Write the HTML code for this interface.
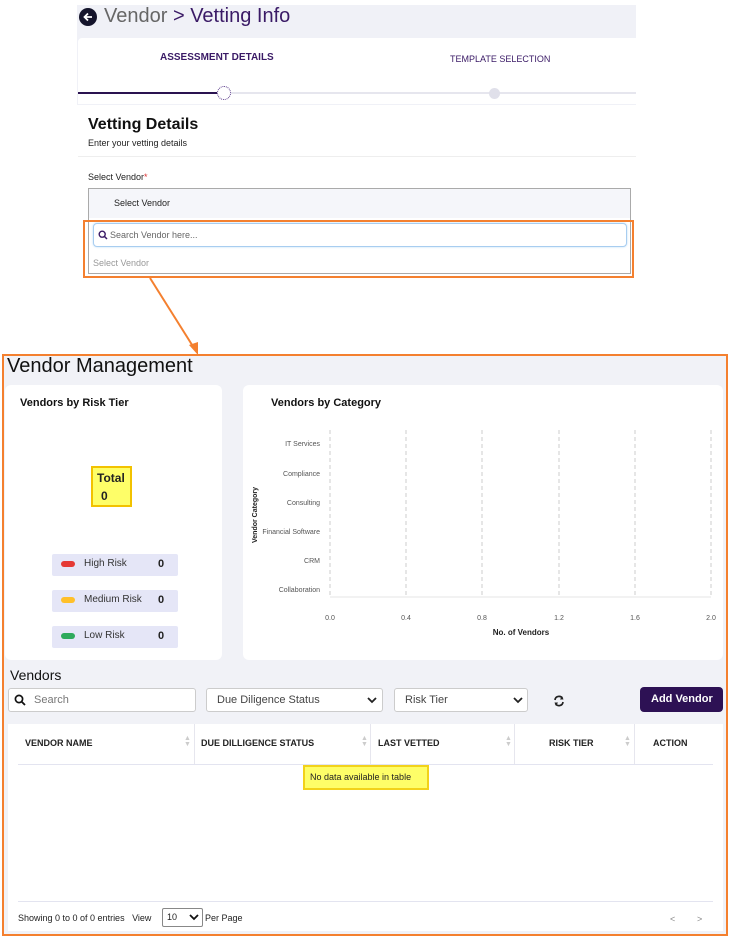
<!DOCTYPE html>
<html><head><meta charset="utf-8"><style>
*{box-sizing:border-box;margin:0;padding:0}
body{width:729px;height:939px;background:#fff;font-family:"Liberation Sans",Arial,sans-serif;position:relative;overflow:hidden;color:#222}
.a{position:absolute}
.t{white-space:nowrap}
</style></head><body>
<div class="a" style="left:77px;top:5px;width:559px;height:100px;background:#f0f1f7"></div>
<div class="a" style="left:79px;top:8px;width:18px;height:18px;border-radius:50%;background:#14142b"></div>
<svg class="a" style="left:79px;top:8px" width="18" height="18"><path d="M13 9H5.5M9 5.5L5.5 9L9 12.5" stroke="#fff" stroke-width="1.8" fill="none"/></svg>
<div class="a t" style="left:104px;top:5px;font-size:20px;color:#666">Vendor <span style="color:#3a1a66">&gt; Vetting Info</span></div>
<div class="a" style="left:78px;top:38px;width:558px;height:66px;background:#fff;border-radius:4px 0 0 0"></div>
<div class="a t" style="left:160px;top:52px;font-size:10px;font-weight:bold;color:#3a1a66">ASSESSMENT DETAILS</div>
<div class="a t" style="left:450px;top:54px;font-size:9px;color:#3a1a66">TEMPLATE SELECTION</div>
<div class="a" style="left:78px;top:92px;width:558px;height:2px;background:#e6e6ee"></div>
<div class="a" style="left:78px;top:92px;width:140px;height:2px;background:#2a1350"></div>
<div class="a" style="left:217px;top:86px;width:14px;height:14px;border-radius:50%;border:1px dotted #5a3a8a;background:#fff"></div>
<div class="a" style="left:489px;top:88px;width:11px;height:11px;border-radius:50%;background:#e0e0ea"></div>
<div class="a" style="left:78px;top:106px;width:558px;height:170px;background:#fff"></div>
<div class="a t" style="left:88px;top:116px;font-size:16px;font-weight:bold;color:#111">Vetting Details</div>
<div class="a t" style="left:88px;top:138px;font-size:9px;color:#222">Enter your vetting details</div>
<div class="a" style="left:78px;top:156px;width:558px;height:1px;background:#eee"></div>
<div class="a t" style="left:88px;top:172px;font-size:9px;color:#222">Select Vendor<span style="color:#d33">*</span></div>
<div class="a" style="left:88px;top:188px;width:543px;height:86px;border:1px solid #aaa;background:#f5f6fa"></div>
<div class="a t" style="left:114px;top:198px;font-size:9px;color:#222">Select Vendor</div>
<div class="a" style="left:89px;top:218px;width:541px;height:55px;background:#fff"></div>
<div class="a" style="left:93px;top:223px;width:534px;height:24px;border:1px solid #a8cdf0;border-radius:4px;box-shadow:0 0 2px #bcdcf7;background:#fff"></div>
<svg class="a" style="left:98px;top:230px" width="10" height="10"><circle cx="4.2" cy="4.2" r="3" stroke="#3a1a66" stroke-width="1.4" fill="none"/><path d="M6.5 6.5L9 9" stroke="#3a1a66" stroke-width="1.5"/></svg>
<div class="a t" style="left:110px;top:230px;font-size:9px;color:#666">Search Vendor here...</div>
<div class="a t" style="left:93px;top:258px;font-size:9px;color:#999">Select Vendor</div>
<div class="a" style="left:83px;top:220px;width:551px;height:58px;border:2px solid #f4802f"></div>
<svg class="a" style="left:0;top:0" width="729" height="360"><path d="M150 278L194 348" stroke="#f4802f" stroke-width="2"/><path d="M189 345L198 355L198 342Z" fill="#f4802f"/></svg>

<div class="a" style="left:2px;top:354px;width:726px;height:582px;background:#f1f2f7;border:2px solid #f4802f"></div>
<div class="a t" style="left:7px;top:355px;font-size:20px;color:#111">Vendor Management</div>
<div class="a" style="left:5px;top:385px;width:217px;height:275px;background:#fff;border-radius:6px"></div>
<div class="a t" style="left:20px;top:397px;font-size:11px;font-weight:bold;color:#111">Vendors by Risk Tier</div>
<div class="a" style="left:91px;top:466px;width:41px;height:41px;background:#fefe68;border:2px solid #f2c200"></div>
<div class="a t" style="left:97px;top:471px;font-size:12px;font-weight:bold">Total</div>
<div class="a t" style="left:101px;top:489px;font-size:12px;font-weight:bold">0</div>
<div class="a" style="left:52px;top:554px;width:126px;height:22px;background:#e5e6f7;border-radius:2px"></div>
<div class="a" style="left:52px;top:590px;width:126px;height:22px;background:#e5e6f7;border-radius:2px"></div>
<div class="a" style="left:52px;top:626px;width:126px;height:22px;background:#e5e6f7;border-radius:2px"></div>
<div class="a" style="left:61px;top:561px;width:14px;height:6px;border-radius:3px;background:#e53935"></div>
<div class="a" style="left:61px;top:597px;width:14px;height:6px;border-radius:3px;background:#ffc02a"></div>
<div class="a" style="left:61px;top:633px;width:14px;height:6px;border-radius:3px;background:#2eaa5c"></div>
<div class="a t" style="left:84px;top:558px;font-size:10px;color:#333">High Risk</div>
<div class="a t" style="left:84px;top:594px;font-size:10px;color:#333">Medium Risk</div>
<div class="a t" style="left:84px;top:630px;font-size:10px;color:#333">Low Risk</div>
<div class="a t" style="left:158px;top:558px;font-size:11px;font-weight:bold">0</div>
<div class="a t" style="left:158px;top:594px;font-size:11px;font-weight:bold">0</div>
<div class="a t" style="left:158px;top:630px;font-size:11px;font-weight:bold">0</div>

<div class="a" style="left:243px;top:385px;width:480px;height:275px;background:#fff;border-radius:6px"></div>
<div class="a t" style="left:271px;top:397px;font-size:11px;font-weight:bold;color:#111">Vendors by Category</div>
<svg class="a" style="left:243px;top:385px" width="480" height="275" font-family="Liberation Sans,Arial,sans-serif">
<g stroke="#ccc" stroke-dasharray="4,3"><path d="M87 45V212M163 45V212M239 45V212M316 45V212M392 45V212M468 45V212"/></g>
<path d="M87 212H468" stroke="#e5e5e5"/>
<g font-size="7" fill="#555" text-anchor="end"><text x="77" y="61">IT Services</text><text x="77" y="91">Compliance</text><text x="77" y="120">Consulting</text><text x="77" y="149">Financial Software</text><text x="77" y="178">CRM</text><text x="77" y="207">Collaboration</text></g>
<g font-size="7" fill="#555" text-anchor="middle"><text x="87" y="235">0.0</text><text x="163" y="235">0.4</text><text x="239" y="235">0.8</text><text x="316" y="235">1.2</text><text x="392" y="235">1.6</text><text x="468" y="235">2.0</text></g>
<text x="278" y="250" font-size="8" font-weight="bold" text-anchor="middle" fill="#222">No. of Vendors</text>
<text transform="translate(14,130) rotate(-90)" font-size="7" font-weight="bold" text-anchor="middle" fill="#222">Vendor Category</text>
</svg>

<div class="a t" style="left:10px;top:667px;font-size:14px;color:#111">Vendors</div>
<div class="a" style="left:8px;top:688px;width:188px;height:24px;background:#fff;border:1px solid #ccc;border-radius:3px"></div>
<svg class="a" style="left:14px;top:694px" width="12" height="12"><circle cx="5" cy="5" r="3.6" stroke="#111" stroke-width="1.7" fill="none"/><path d="M7.6 7.6L11 11" stroke="#111" stroke-width="1.8"/></svg>
<div class="a t" style="left:34px;top:694px;font-size:11px;color:#777">Search</div>
<div class="a" style="left:206px;top:688px;width:177px;height:24px;background:#fff;border:1px solid #ccc;border-radius:3px"></div>
<div class="a t" style="left:217px;top:694px;font-size:11px;color:#444">Due Diligence Status</div>
<div class="a" style="left:394px;top:688px;width:134px;height:24px;background:#fff;border:1px solid #ccc;border-radius:3px"></div>
<div class="a t" style="left:405px;top:694px;font-size:11px;color:#444">Risk Tier</div>
<svg class="a" style="left:367px;top:696px" width="10" height="8"><path d="M1 2L5 6L9 2" stroke="#222" stroke-width="1.8" fill="none"/></svg>
<svg class="a" style="left:513px;top:696px" width="10" height="8"><path d="M1 2L5 6L9 2" stroke="#222" stroke-width="1.8" fill="none"/></svg>
<svg class="a" style="left:553px;top:695px" width="12" height="12"><path d="M2 5A4 4 0 0 1 9.5 3.5M10 7A4 4 0 0 1 2.5 8.5" stroke="#222" stroke-width="1.7" fill="none"/><path d="M9 1L10.5 4.5L7 4.5Z M3 11L1.5 7.5L5 7.5Z" fill="#222"/></svg>
<div class="a" style="left:640px;top:687px;width:83px;height:25px;background:#2d1154;border-radius:4px"></div>
<div class="a t" style="left:651px;top:693px;font-size:11px;font-weight:bold;color:#fff">Add Vendor</div>

<div class="a" style="left:8px;top:724px;width:715px;height:207px;background:#fff"></div>
<div class="a" style="left:194px;top:724px;width:1px;height:40px;background:#e6e6ee"></div>
<div class="a" style="left:370px;top:724px;width:1px;height:40px;background:#e6e6ee"></div>
<div class="a" style="left:514px;top:724px;width:1px;height:40px;background:#e6e6ee"></div>
<div class="a" style="left:634px;top:724px;width:1px;height:40px;background:#e6e6ee"></div>
<div class="a" style="left:18px;top:764px;width:695px;height:1px;background:#e3e4f0"></div>
<div class="a t" style="left:25px;top:738px;font-size:9px;font-weight:bold;color:#222">VENDOR NAME</div>
<div class="a t" style="left:201px;top:738px;font-size:9px;font-weight:bold;color:#222">DUE DILLIGENCE STATUS</div>
<div class="a t" style="left:378px;top:738px;font-size:9px;font-weight:bold;color:#222">LAST VETTED</div>
<div class="a t" style="left:549px;top:738px;font-size:9px;font-weight:bold;color:#222">RISK TIER</div>
<div class="a t" style="left:653px;top:738px;font-size:9px;font-weight:bold;color:#222">ACTION</div>
<div class="a t" style="left:184px;top:736px;font-size:7px;color:#ccc;line-height:6px">▲<br>▼</div>
<div class="a t" style="left:361px;top:736px;font-size:7px;color:#ccc;line-height:6px">▲<br>▼</div>
<div class="a t" style="left:505px;top:736px;font-size:7px;color:#ccc;line-height:6px">▲<br>▼</div>
<div class="a t" style="left:624px;top:736px;font-size:7px;color:#ccc;line-height:6px">▲<br>▼</div>
<div class="a" style="left:303px;top:765px;width:126px;height:25px;background:#fefe68;border:2px solid #f2d21a"></div>
<div class="a t" style="left:310px;top:772px;font-size:9px;color:#222">No data available in table</div>
<div class="a" style="left:18px;top:901px;width:695px;height:1px;background:#e3e4f0"></div>
<div class="a t" style="left:18px;top:913px;font-size:9px;color:#222">Showing 0 to 0 of 0 entries &nbsp; View</div>
<div class="a" style="left:162px;top:908px;width:41px;height:19px;border:1px solid #888;border-radius:2px;background:#fff"></div>
<div class="a t" style="left:167px;top:912px;font-size:9px;color:#222">10</div>
<svg class="a" style="left:189px;top:914px" width="10" height="7"><path d="M1 1L5 5L9 1" stroke="#111" stroke-width="1.8" fill="none"/></svg>
<div class="a t" style="left:205px;top:913px;font-size:9px;color:#222">Per Page</div>
<div class="a t" style="left:670px;top:914px;font-size:9px;color:#888">&lt;</div>
<div class="a t" style="left:697px;top:914px;font-size:9px;color:#888">&gt;</div>
</body></html>
